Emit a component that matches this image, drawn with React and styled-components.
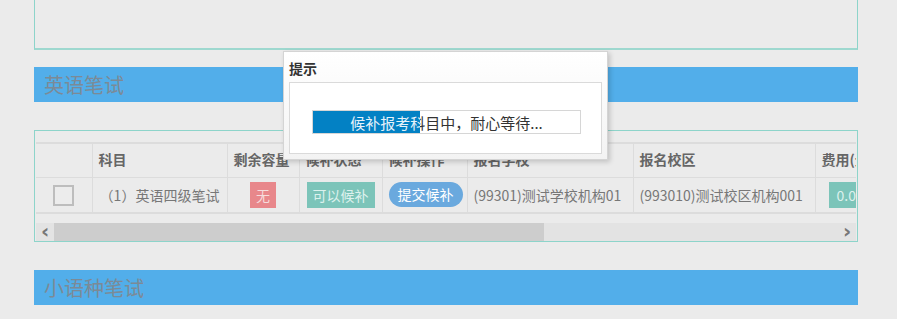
import React from 'react';
import styled, {createGlobalStyle} from 'styled-components';

const GlobalStyle = createGlobalStyle`
  html, body {
    margin: 0;
    padding: 0;
    background: #ebebeb;
    font-family: "Microsoft YaHei", "Noto Sans CJK SC", sans-serif;
  }
`;

const columns = [
  {key: 'check', title: '', width: 56},
  {key: 'subject', title: '科目', width: 135},
  {key: 'left', title: '剩余容量', width: 72},
  {key: 'status', title: '候补状态', width: 83},
  {key: 'action', title: '候补操作', width: 85},
  {key: 'school', title: '报名学校', width: 166},
  {key: 'campus', title: '报名校区', width: 182},
  {key: 'fee', title: '费用(元)', width: 90},
];

function App() {
  return (
    <Page>
      <GlobalStyle/>
      <TopPanel/>
      <SectionBar $gap={17}>英语笔试</SectionBar>
      <TablePanel>
        <TableClip>
          <Grid>
            <colgroup>
              {columns.map(c => <col key={c.key} style={{width: c.width}}/>)}
            </colgroup>
            <thead>
              <tr>
                {columns.map(c => <HeadCell key={c.key}>{c.title}</HeadCell>)}
              </tr>
            </thead>
            <tbody>
              <tr>
                <Cell $center><CheckBox/></Cell>
                <Cell $center>（1）英语四级笔试</Cell>
                <Cell $center><Tag $bg="#e8878b" $color="#f6dcdc">无</Tag></Cell>
                <Cell $center><Tag $bg="#7cc4b9" $color="#dcf1ed">可以候补</Tag></Cell>
                <Cell $center><Pill>提交候补</Pill></Cell>
                <Cell>(99301)测试学校机构01</Cell>
                <Cell>(993010)测试校区机构001</Cell>
                <Cell><FeeTag>0.01</FeeTag></Cell>
              </tr>
            </tbody>
          </Grid>
        </TableClip>
        <ScrollBar>
          <Arrow>‹</Arrow>
          <Track>
            <Thumb/>
          </Track>
          <Arrow>›</Arrow>
        </ScrollBar>
      </TablePanel>
      <SectionBar $gap={28}>小语种笔试</SectionBar>

      <Dialog>
        <DialogTitle>提示</DialogTitle>
        <DialogBody>
          <Progress>
            <ProgressText>候补报考科目中，耐心等待...</ProgressText>
            <ProgressFill style={{width: '40%'}}>
              <ProgressText $light>候补报考科目中，耐心等待...</ProgressText>
            </ProgressFill>
          </Progress>
        </DialogBody>
      </Dialog>
    </Page>
  );
}

const Page = styled.div`
  position: relative;
  width: 824px;
  padding-left: 34px;
  height: 319px;
  overflow: hidden;
`;

const TopPanel = styled.div`
  height: 48px;
  border: 1px solid #8dd4ca;
  border-top: none;
  border-bottom-width: 2px;
  border-bottom-color: #9ed8cf;
`;

const SectionBar = styled.div`
  margin-top: ${p => p.$gap}px;
  height: 35px;
  background: #52aeea;
  color: #7c8a96;
  font-size: 20px;
  line-height: 36px;
  padding-left: 10px;
`;

const TablePanel = styled.div`
  margin-top: 28px;
  border: 1px solid #8dd4ca;
  padding: 11px 1px 0 1px;
`;

const TableClip = styled.div`
  overflow: hidden;
  height: 81px;
`;

const Grid = styled.table`
  border-collapse: collapse;
  table-layout: fixed;
  width: 869px;
  font-size: 14px;
  color: #777;
`;

const HeadCell = styled.th`
  box-sizing: border-box;
  height: 34px;
  padding: 0 6px 2px 6px;
  text-align: left;
  font-weight: bold;
  color: #666;
  border: 1px solid #dcdcdc;
  border-top: 2px solid #dcdcdc;
  border-left: none;
  white-space: nowrap;
  overflow: hidden;
  &:last-child { border-right: none; }
`;

const Cell = styled.td`
  box-sizing: border-box;
  height: 36px;
  padding: 0 6px;
  text-align: ${p => (p.$center ? 'center' : 'left')};
  border-right: 1px solid #dcdcdc;
  border-bottom: 2px solid #dcdcdc;
  white-space: nowrap;
  overflow: hidden;
`;

const CheckBox = styled.span`
  display: inline-block;
  vertical-align: middle;
  width: 17px;
  height: 17px;
  border: 2px solid #bdbdbd;
  background: #ececec;
`;

const Tag = styled.span`
  display: inline-block;
  vertical-align: middle;
  height: 26px;
  line-height: 26px;
  padding: 0 6px;
  background: ${p => p.$bg};
  color: ${p => p.$color};
  font-size: 14px;
`;

const Pill = styled.span`
  display: inline-block;
  vertical-align: middle;
  height: 25px;
  line-height: 25px;
  padding: 0 9px;
  border-radius: 13px;
  background: #6aa9de;
  color: #fff;
`;

const FeeTag = styled(Tag).attrs({$bg: '#7cc4b9', $color: '#dcf1ed'})`
  margin-left: 7px;
  padding: 0 8px;
`;

const ScrollBar = styled.div`
  display: flex;
  height: 18px;
  background: #e3e3e3;
`;

const Arrow = styled.div`
  width: 18px;
  text-align: center;
  color: #777;
  font-size: 20px;
  font-weight: bold;
  line-height: 17px;
  font-family: "DejaVu Sans", sans-serif;
`;

const Track = styled.div`
  flex: 1;
  background: #e3e3e3;
`;

const Thumb = styled.div`
  width: 490px;
  height: 100%;
  background: #cdcdcd;
`;

const Dialog = styled.div`
  position: absolute;
  left: 283px;
  top: 51px;
  width: 325px;
  height: 109px;
  padding: 0 5px 5px 5px;
  box-sizing: border-box;
  background: linear-gradient(#ffffff, #f3f3f3);
  border: 1px solid #d4d4d4;
  box-shadow: 2px 2px 5px rgba(0, 0, 0, 0.18);
  display: flex;
  flex-direction: column;
`;

const DialogTitle = styled.div`
  height: 30px;
  line-height: 33px;
  font-size: 14px;
  font-weight: bold;
  color: #333;
`;

const DialogBody = styled.div`
  flex: 1;
  background: #fff;
  border: 1px solid #dadada;
  padding: 27px 0 0 22px;
`;

const Progress = styled.div`
  position: relative;
  width: 267px;
  height: 22px;
  border: 1px solid #d6d6d6;
  background: #fff;
`;

const ProgressText = styled.div`
  position: absolute;
  left: 0;
  top: 0;
  width: 267px;
  height: 22px;
  line-height: 23px;
  text-align: center;
  font-size: 15px;
  color: ${p => (p.$light ? '#e6f2fa' : '#333')};
  white-space: nowrap;
`;

const ProgressFill = styled.div`
  position: absolute;
  left: 0;
  top: 0;
  height: 22px;
  overflow: hidden;
  background: #0381c4;
`;

export default App;
